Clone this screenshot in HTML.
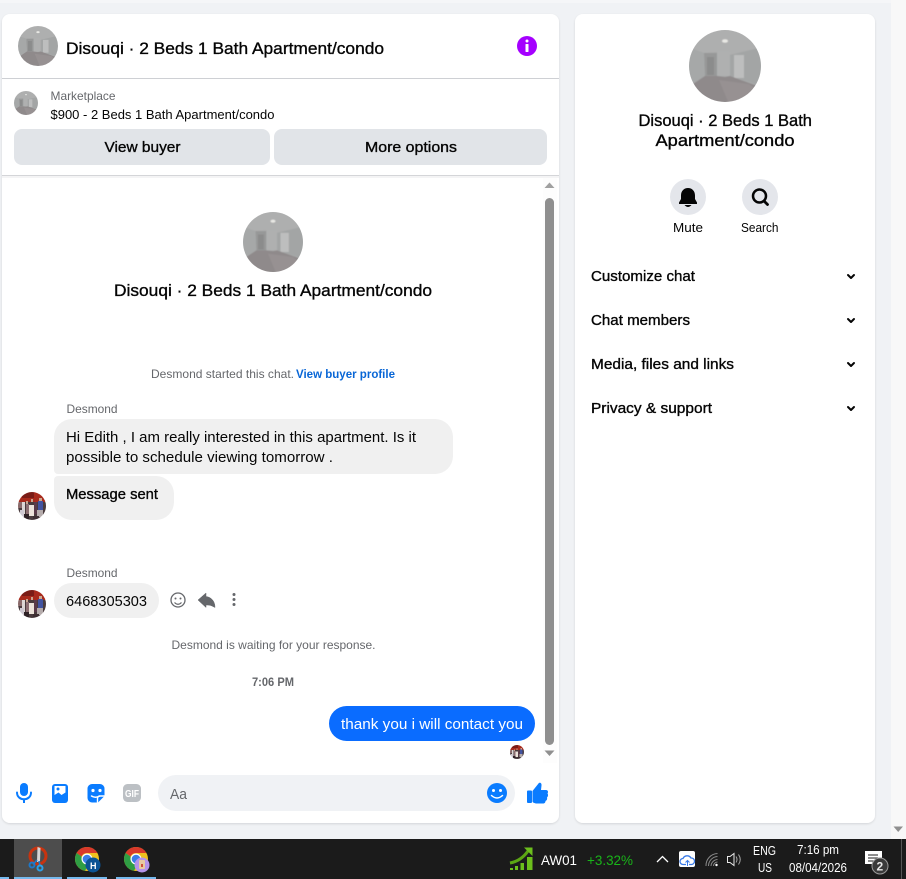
<!DOCTYPE html>
<html><head><meta charset="utf-8"><title>Marketplace chat</title>
<style>
html,body{margin:0;padding:0;width:906px;height:879px;overflow:hidden;background:#f0f2f5}
svg{display:block}
text{font-family:"Liberation Sans",sans-serif;fill:#050505}
.sb{stroke:#050505;stroke-width:.35px}
.gr{fill:#65676b}
</style></head><body>
<svg width="906" height="879" viewBox="0 0 906 879" xmlns="http://www.w3.org/2000/svg">
<defs>
<filter id="sh" x="-5%" y="-5%" width="110%" height="110%"><feDropShadow dx="0" dy="1" stdDeviation="1" flood-color="#000" flood-opacity=".12"/></filter>
<filter id="soft" x="0" y="0" width="100%" height="100%"><feGaussianBlur stdDeviation=".5" edgeMode="duplicate"/></filter>
<filter id="soft2" x="0" y="0" width="100%" height="100%"><feGaussianBlur stdDeviation=".35" edgeMode="duplicate"/></filter>
<clipPath id="c"><circle cx="36" cy="36" r="36"/></clipPath>
<symbol id="room" viewBox="0 0 72 72">
<g clip-path="url(#c)">
<g filter="url(#soft)">
<rect x="-2" y="-2" width="76" height="76" fill="#a8a9a9"/>
<path d="M-2 -2H74V17L41 25 28 22 15 23 -2 17Z" fill="#aeafaf"/>
<path d="M15 23H28V47L16 46Z" fill="#979898"/>
<rect x="18" y="27" width="7" height="18" fill="#8b8c8c"/>
<path d="M28 22H41V46L28 46Z" fill="#afb0b0"/>
<path d="M41 25L74 17V56L41 46Z" fill="#a3a5a5"/>
<rect x="45" y="25" width="10" height="23" fill="#bdbebe"/>
<path d="M-2 17L15 23 16 46 -2 56Z" fill="#a6a8a8"/>
<path d="M-2 58L16 46 28 46 36 47 41 46 74 58V74H-2Z" fill="#8f8a8b"/>
<path d="M30 50L60 54 74 64V74H40Z" fill="#979192"/>
<ellipse cx="36" cy="11" rx="3" ry="1.800" fill="#e8e8e4"/>
</g>
</g>
</symbol>
<clipPath id="d"><circle cx="14" cy="14" r="14"/></clipPath>
<symbol id="man" viewBox="0 0 28 28">
<g clip-path="url(#d)">
<g filter="url(#soft2)">
<rect width="28" height="28" fill="#4a3a3e"/>
<rect width="28" height="10" fill="#a82a1e"/>
<rect x="4" y="0" width="12" height="6" fill="#7a1e18"/>
<rect x="0" y="10" width="5" height="6" fill="#8a6a6a"/>
<rect x="4" y="10" width="3" height="12" fill="#dcd6d4"/>
<rect x="8" y="9" width="2" height="3" fill="#c9a58e"/>
<rect x="13" y="7" width="2" height="3" fill="#c9a58e"/>
<rect x="21" y="6" width="3" height="3" fill="#c9a58e"/>
<rect x="8" y="12" width="3" height="10" fill="#8c6e72"/>
<rect x="11" y="13" width="5" height="11" fill="#ece3da"/>
<rect x="16" y="10" width="3" height="12" fill="#5a3a48"/>
<rect x="20" y="9" width="5" height="9" fill="#4253a0"/>
<rect x="2" y="18" width="4" height="7" fill="#cfc9d2"/>
<rect x="19" y="18" width="6" height="7" fill="#b5acac"/>
<rect x="6" y="22" width="5" height="6" fill="#2d2326"/>
<rect x="15" y="24" width="6" height="4" fill="#3c2e33"/>
</g>
</g>
</symbol>
<g id="chrome">
<circle cx="82" cy="858" r="12" fill="#f0c01e"/>
<path d="M82 846A12 12 0 0 1 92.400 852H82A6 6 0 0 0 76.500 855.500L71.600 852A12 12 0 0 1 82 846Z" fill="#d9392b"/>
<path d="M71.600 852A12 12 0 0 0 80 869.800L85 861A6 6 0 0 1 76.500 855.500Z" fill="#2f9e44"/>
<circle cx="82" cy="858" r="5.500" fill="#fff"/>
<circle cx="82" cy="858" r="4.300" fill="#3b7de8"/>
</g>
</defs>

<rect x="0" y="0" width="906" height="3" fill="#f5f6f8"/>
<rect x="891" y="0" width="15" height="839" fill="#f8f8f8"/>
<path d="M893.500 826.500H903L898.200 832Z" fill="#8f8f8f"/>

<!-- left card -->
<rect x="2" y="14" width="557" height="809" rx="8" fill="#fff" filter="url(#sh)"/>
<use href="#room" x="18" y="26" width="40" height="40"/>
<text x="66" y="54" font-size="17" class="sb" textLength="318" lengthAdjust="spacingAndGlyphs">Disouqi · 2 Beds 1 Bath Apartment/condo</text>
<circle cx="527" cy="46" r="10" fill="#a500ff"/>
<circle cx="527" cy="41" r="1.500" fill="#fff"/>
<rect x="525.500" y="44" width="3" height="8" rx=".5" fill="#fff"/>
<rect x="2" y="78" width="557" height="1" fill="#ced0d4"/>
<use href="#room" x="14" y="91" width="24" height="24"/>
<text x="50.500" y="100" font-size="12" class="gr" textLength="65" lengthAdjust="spacingAndGlyphs">Marketplace</text>
<text x="50.500" y="119" font-size="12.500" textLength="224" lengthAdjust="spacingAndGlyphs">$900 - 2 Beds 1 Bath Apartment/condo</text>
<rect x="14" y="129" width="256" height="36" rx="8" fill="#e1e4e8"/>
<rect x="274" y="129" width="273" height="36" rx="8" fill="#e1e4e8"/>
<text x="104.500" y="152" font-size="15" class="sb" textLength="76" lengthAdjust="spacingAndGlyphs">View buyer</text>
<text x="365" y="152" font-size="15" class="sb" textLength="92" lengthAdjust="spacingAndGlyphs">More options</text>
<rect x="2" y="175" width="557" height="1" fill="#d4d5d8"/>
<rect x="2" y="176" width="557" height="2" fill="#f4f4f5"/>

<!-- scrollbar -->
<rect x="543" y="178" width="14" height="585" fill="#fdfdfd"/>
<path d="M544.500 188H554.500L549.500 182.500Z" fill="#a0a0a0"/>
<rect x="545" y="198" width="9" height="547" rx="4.500" fill="#8f8f8f"/>
<path d="M544.500 750.500H554.500L549.500 756Z" fill="#8f8f8f"/>

<!-- chat head -->
<use href="#room" x="243" y="212" width="60" height="60"/>
<text x="114" y="296" font-size="17" class="sb" textLength="318" lengthAdjust="spacingAndGlyphs">Disouqi · 2 Beds 1 Bath Apartment/condo</text>
<text x="151" y="378" font-size="12" class="gr" textLength="143" lengthAdjust="spacingAndGlyphs">Desmond started this chat.</text>
<text x="296" y="378" font-size="12" font-weight="bold" style="fill:#0866d6" textLength="99" lengthAdjust="spacingAndGlyphs">View buyer profile</text>

<!-- messages -->
<text x="66.500" y="413" font-size="12" class="gr" textLength="51" lengthAdjust="spacingAndGlyphs">Desmond</text>
<path d="M72 419H435A18 18 0 0 1 453 437V456A18 18 0 0 1 435 474H58A4 4 0 0 1 54 470V437A18 18 0 0 1 72 419Z" fill="#f0f0f0"/>
<text x="66" y="442" font-size="15" textLength="350" lengthAdjust="spacingAndGlyphs">Hi Edith , I am really interested in this apartment. Is it</text>
<text x="66" y="462" font-size="15" textLength="267" lengthAdjust="spacingAndGlyphs">possible to schedule viewing tomorrow .</text>
<path d="M58 476H156A18 18 0 0 1 174 494V502A18 18 0 0 1 156 520H72A18 18 0 0 1 54 502V480A4 4 0 0 1 58 476Z" fill="#f0f0f0"/>
<text x="66" y="499" font-size="15" class="sb" textLength="92" lengthAdjust="spacingAndGlyphs">Message sent</text>
<use href="#man" x="18" y="492" width="28" height="28"/>

<text x="66.500" y="577" font-size="12" class="gr" textLength="51" lengthAdjust="spacingAndGlyphs">Desmond</text>
<use href="#man" x="18" y="590" width="28" height="28"/>
<rect x="54" y="583" width="105" height="35" rx="17.500" fill="#f0f0f0"/>
<text x="66" y="606" font-size="15" textLength="81" lengthAdjust="spacingAndGlyphs">6468305303</text>
<circle cx="178" cy="600" r="7" fill="none" stroke="#65676b" stroke-width="1.300"/>
<circle cx="175.500" cy="598.500" r="1" fill="#65676b"/>
<circle cx="180.500" cy="598.500" r="1" fill="#65676b"/>
<path d="M174.500 602.500Q178 606 181.500 602.500" fill="none" stroke="#65676b" stroke-width="1.200"/>
<path d="M198 600L206 593V596.500C211 597 215 601 215 607.500L212 606C210 605 208 605 206 605V607.500Z" fill="#65676b" stroke="#65676b" stroke-width=".5" stroke-linejoin="round"/>
<circle cx="234" cy="594.500" r="1.500" fill="#65676b"/>
<circle cx="234" cy="599.500" r="1.500" fill="#65676b"/>
<circle cx="234" cy="604.500" r="1.500" fill="#65676b"/>

<text x="171.500" y="649" font-size="12" class="gr" textLength="204" lengthAdjust="spacingAndGlyphs">Desmond is waiting for your response.</text>
<text x="252" y="686" font-size="12" font-weight="bold" class="gr" textLength="42" lengthAdjust="spacingAndGlyphs">7:06 PM</text>

<rect x="329" y="706" width="206" height="35" rx="17.500" fill="#0a6cff"/>
<text x="341" y="729" font-size="15" style="fill:#fff" textLength="182" lengthAdjust="spacingAndGlyphs">thank you i will contact you</text>
<use href="#man" x="510" y="745" width="14" height="14"/>

<!-- composer -->
<rect x="20" y="783" width="8" height="13" rx="4" fill="#0a7cff"/>
<path d="M17 792.500C17 801.500 31 801.500 31 792.500" fill="none" stroke="#0a7cff" stroke-width="2" stroke-linecap="round"/>
<rect x="23" y="799" width="2" height="4" fill="#0a7cff"/>
<rect x="52" y="784" width="16" height="19" rx="3" fill="#0a7cff"/>
<path d="M54.500 786H65.500V792.500L61.500 795 58.500 792.500 54.500 795Z" fill="#fff"/>
<circle cx="58" cy="789" r="1.500" fill="#0a7cff"/>
<path d="M92 784H100A4.500 4.500 0 0 1 104.500 788.500V796L98 802.500H92A4.500 4.500 0 0 1 87.500 798V788.500A4.500 4.500 0 0 1 92 784Z" fill="#0a7cff"/>
<circle cx="93" cy="790.500" r="1.600" fill="#fff"/>
<circle cx="100" cy="790.500" r="1.600" fill="#fff"/>
<path d="M91.500 796Q95.500 798.500 99.500 796" fill="none" stroke="#fff" stroke-width="1.500" stroke-linecap="round"/>
<path d="M97.500 802.500V798.500C97.500 797 98.500 796 100 796H105" fill="none" stroke="#fff" stroke-width="1.400"/>
<rect x="123" y="784" width="18" height="18" rx="4.500" fill="#bcc0c4"/>
<text x="125" y="797" font-size="10" font-weight="bold" style="fill:#fff" textLength="14" lengthAdjust="spacingAndGlyphs">GIF</text>
<rect x="158" y="775" width="357" height="36" rx="18" fill="#f0f2f5"/>
<text x="170" y="799" font-size="15" style="fill:#65676b" textLength="17" lengthAdjust="spacingAndGlyphs">Aa</text>
<circle cx="497" cy="793" r="10" fill="#0a7cff"/>
<circle cx="493.500" cy="790.500" r="1.500" fill="#fff"/>
<circle cx="500.500" cy="790.500" r="1.500" fill="#fff"/>
<path d="M491.500 795.500Q497 800.500 502.500 795.500" fill="none" stroke="#fff" stroke-width="1.500" stroke-linecap="round"/>
<rect x="527" y="790.500" width="5" height="12.500" rx="1" fill="#0a7cff"/>
<path d="M532.500 791L538.500 783.500C539.500 782 542 783 541.500 785.500L541 790H546C548 790 548.500 792 547.500 793.500 548.500 795 548 796.500 547 797.500 547.500 799.500 546.500 800.500 545.500 801 545.500 802.500 544.500 803.500 543 803.500H537C535 803.500 532.500 802.500 532.500 801.500Z" fill="#0a7cff"/>

<!-- right card -->
<rect x="575" y="14" width="300" height="809" rx="8" fill="#fff" filter="url(#sh)"/>
<use href="#room" x="689" y="30" width="72" height="72"/>
<text x="638.500" y="126" font-size="17" class="sb" textLength="173.500" lengthAdjust="spacingAndGlyphs">Disouqi · 2 Beds 1 Bath</text>
<text x="655.500" y="146" font-size="17" class="sb" textLength="139" lengthAdjust="spacingAndGlyphs">Apartment/condo</text>
<circle cx="688" cy="197" r="18" fill="#e4e6eb"/>
<path d="M688 188C684 188 681 191 681 195.500V199L679 202.500V204H697V202.500L695 199V195.500C695 191 692 188 688 188Z" fill="#050505"/>
<path d="M684.500 205Q688 209 691.500 205Z" fill="#050505"/>
<circle cx="760" cy="197" r="18" fill="#e4e6eb"/>
<circle cx="759.500" cy="196" r="6.500" fill="none" stroke="#050505" stroke-width="2.500"/>
<path d="M764 201L767.500 204.500" stroke="#050505" stroke-width="2.800" stroke-linecap="round"/>
<text x="673" y="232" font-size="12.500" textLength="30" lengthAdjust="spacingAndGlyphs">Mute</text>
<text x="741" y="232" font-size="12.500" textLength="37.500" lengthAdjust="spacingAndGlyphs">Search</text>

<text x="591" y="281" font-size="15" class="sb" textLength="104" lengthAdjust="spacingAndGlyphs">Customize chat</text>
<text x="591" y="325" font-size="15" class="sb" textLength="99" lengthAdjust="spacingAndGlyphs">Chat members</text>
<text x="591" y="369" font-size="15" class="sb" textLength="143" lengthAdjust="spacingAndGlyphs">Media, files and links</text>
<text x="591" y="413" font-size="15" class="sb" textLength="121" lengthAdjust="spacingAndGlyphs">Privacy &amp; support</text>
<g fill="none" stroke="#050505" stroke-width="2" stroke-linecap="round" stroke-linejoin="round">
<path d="M848 275L851 278 854 275"/>
<path d="M848 319L851 322 854 319"/>
<path d="M848 363L851 366 854 363"/>
<path d="M848 407L851 410 854 407"/>
</g>

<!-- taskbar -->
<rect x="0" y="839" width="906" height="40" fill="#1b1b1b"/>
<rect x="14" y="839" width="48" height="40" fill="#4d4d4d"/>
<rect x="0" y="877" width="9" height="2" fill="#76b9ed"/>
<rect x="14" y="877" width="48" height="2" fill="#76b9ed"/>
<rect x="67" y="877" width="40" height="2" fill="#76b9ed"/>
<rect x="116" y="877" width="40" height="2" fill="#76b9ed"/>
<!-- snipping icon -->
<circle cx="38" cy="856" r="8" fill="none" stroke="#c8330f" stroke-width="3"/>
<path d="M37.500 847L40.500 848 40 862 37 862Z" fill="#d5d5d5"/>
<path d="M37 860L33 864.500M39 861L40 866" stroke="#1f78c8" stroke-width="1.600"/>
<circle cx="32" cy="865" r="2.500" fill="none" stroke="#1f78c8" stroke-width="2"/>
<circle cx="40" cy="868" r="2.500" fill="none" stroke="#2aa0e8" stroke-width="2"/>
<!-- chrome -->
<use href="#chrome" x="5" y="1"/>
<circle cx="93" cy="865" r="7.500" fill="#0b5394"/>
<text x="90" y="869" font-size="9" font-weight="bold" style="fill:#fff">H</text>
<use href="#chrome" x="54" y="1"/>
<circle cx="142" cy="865" r="7.500" fill="#b593ea"/>
<rect x="139" y="860" width="6" height="9" rx="1" fill="#e8c9a0"/>
<rect x="141" y="864" width="2" height="3" fill="#d0503a"/>

<!-- tray -->
<path d="M510 868h3v2h-3zM515 866h3v4h-3zM520.500 863h3.500v7h-3.500zM527 857h5.500v13h-5.500z" fill="#6cbf1c"/>
<path d="M510 863Q521 861 528 851" fill="none" stroke="#5ca614" stroke-width="3"/>
<path d="M524 847.500H532.500V856Z" fill="#6cbf1c"/>
<text x="541" y="865" font-size="14" style="fill:#fff" textLength="36" lengthAdjust="spacingAndGlyphs">AW01</text>
<text x="587" y="865" font-size="14" style="fill:#19b419" textLength="46" lengthAdjust="spacingAndGlyphs">+3.32%</text>
<path d="M657 862L662.500 856.500 668 862" fill="none" stroke="#fff" stroke-width="1.300"/>
<rect x="679" y="851" width="16" height="16" rx="2" fill="#fff"/>
<path d="M683 864.500A3 3 0 0 1 683 858.500 4.500 4.500 0 0 1 691 858 3 3 0 0 1 691.500 864.500H689M686 864.500H683" fill="none" stroke="#3a7be8" stroke-width="1.300"/>
<path d="M687.500 866V861M685.500 862.500L687.500 860.500 689.500 862.500" fill="none" stroke="#3a7be8" stroke-width="1"/>
<path d="M706 866A12 12 0 0 1 717.500 853.500M708.500 866A9.500 9.500 0 0 1 717.500 856.500M711 866A7 7 0 0 1 717.500 859.500M713.500 866A4 4 0 0 1 717.500 862" fill="none" stroke="#8a8a8a" stroke-width="1"/>
<circle cx="716.500" cy="865" r="1.200" fill="#fff"/>
<path d="M727.500 856.500V862.500H730L734 865.500V853.500L730 856.500Z" fill="none" stroke="#e8e8e8" stroke-width="1"/>
<path d="M736 856.500Q738 859.500 736 862.500M738.500 854.500Q742 859.500 738.500 864.500" fill="none" stroke="#a8a8a8" stroke-width="1"/>
<text x="753" y="855" font-size="13" style="fill:#fff" textLength="23" lengthAdjust="spacingAndGlyphs">ENG</text>
<text x="758" y="872" font-size="13" style="fill:#fff" textLength="14" lengthAdjust="spacingAndGlyphs">US</text>
<text x="797" y="854" font-size="13" style="fill:#fff" textLength="42" lengthAdjust="spacingAndGlyphs">7:16 pm</text>
<text x="789" y="872" font-size="13" style="fill:#fff" textLength="58" lengthAdjust="spacingAndGlyphs">08/04/2026</text>
<path d="M865 851H882V864H865Z" fill="#fff"/>
<path d="M868 855H878M868 858H878M868 861H875" stroke="#1b1b1b" stroke-width="1"/>
<circle cx="880" cy="866" r="8" fill="#3a3a3a" stroke="#9a9a9a" stroke-width="1"/>
<text x="876.500" y="870.500" font-size="12" font-weight="bold" style="fill:#e8e8e8">2</text>
<rect x="901" y="839" width="1" height="40" fill="#555"/>
</svg>
</body></html>
